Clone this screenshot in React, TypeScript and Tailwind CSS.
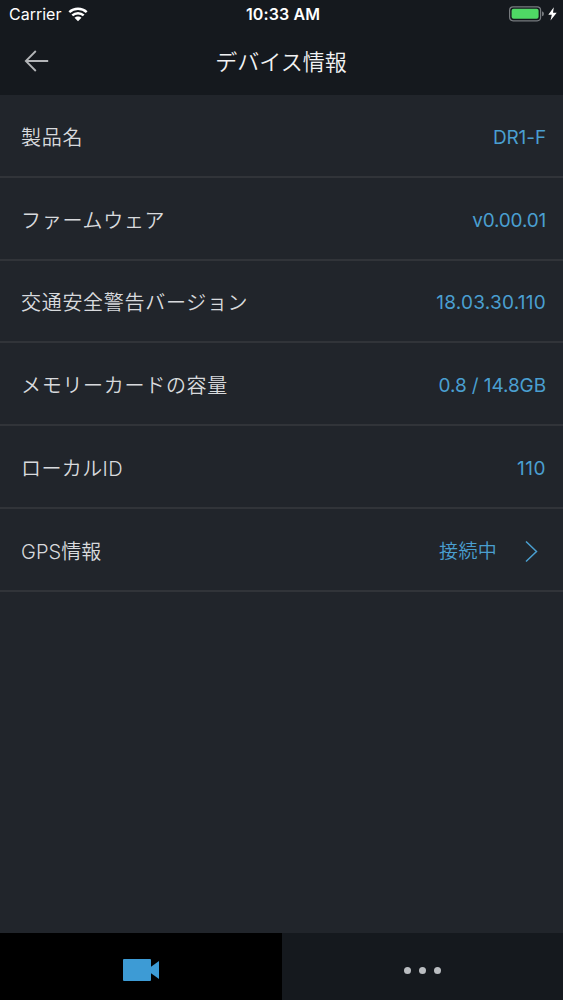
import React from "react";

const rows = [
  { label: "製品名", value: "DR1-F", valueClass: "tracking-[-0.1px]" },
  { label: "ファームウェア", value: "v0.00.01", valueClass: "tracking-[-0.2px]" },
  {
    label: "交通安全警告バージョン",
    value: "18.03.30.110",
    valueClass: "tracking-[0.25px]",
  },
  {
    label: "メモリーカードの容量",
    value: "0.8 / 14.8GB",
    valueClass: "tracking-[-0.1px]",
  },
  {
    label: "ローカルID",
    value: "110",
    labelClass: "tracking-[0.4px]",
    valueClass: "tracking-[0.5px]",
  },
  {
    label: "GPS情報",
    value: "接続中",
    labelClass: "tracking-[0.05px]",
    valueClass: "tracking-[0.3px] font-[350]",
    link: true,
  },
];

function StatusBar() {
  return (
    <div className="grid grid-cols-3 items-center h-7 pl-[9px] pr-[6px] text-white">
      <div className="flex items-center gap-[7px] text-[16px] leading-7">
        <span>Carrier</span>
        <svg width="20" height="15" viewBox="0 0 20 15" fill="none">
          <path
            d="M1.3 5.2C6.2 .7 13.8 .7 18.7 5.2M4.3 8.4C7.5 5.5 12.5 5.5 15.7 8.4"
            stroke="white"
            strokeWidth="2.5"
          />
          <path d="M6.5 10.8c2-1.9 5-1.9 7 0L10 14.3z" fill="white" />
        </svg>
      </div>
      <span className="text-center text-[16px] leading-7 font-semibold tracking-[0.1px]">
        10:33 AM
      </span>
      <div className="flex items-center justify-end">
        <svg width="36" height="16" viewBox="0 0 36 16" fill="none">
          <rect
            x=".6"
            y=".8"
            width="31"
            height="14"
            rx="3.5"
            stroke="#777b7f"
            strokeWidth="1.2"
          />
          <rect x="2.6" y="2.8" width="27" height="10" rx="2" fill="#4fd865" />
          <path d="M33 5.3q2 .5 2 2.5t-2 2.5z" fill="#777b7f" />
        </svg>
        <svg className="ml-[3px]" width="9" height="14" viewBox="0 0 9 14">
          <path d="M5.8 .3.3 7.8h3.5L2.5 13.6 8.7 5.7H5z" fill="white" />
        </svg>
      </div>
    </div>
  );
}

function Header() {
  return (
    <header className="h-[95px] shrink-0 bg-[#15191e]">
      <StatusBar />
      <div className="grid grid-cols-[80px_1fr_80px] items-center h-[66px]">
        <svg
          className="ml-6"
          width="25"
          height="22"
          viewBox="0 0 25 22"
          fill="none"
          stroke="#b3b5b8"
          strokeWidth="1.8"
        >
          <path d="M11.8 1 1.8 11l10 10M1.8 11h22.4" />
        </svg>
        <h1 className="-ml-px pt-0.5 text-center text-[22px] leading-8 font-[350] text-[#f1f2f3]">
          デバイス情報
        </h1>
      </div>
    </header>
  );
}

export default function App() {
  return (
    <div className="flex flex-col w-full h-screen overflow-hidden bg-[#21252b] font-['Inter','Noto_Sans_CJK_JP',sans-serif]">
      <Header />
      <main className="flex-1">
        {rows.map(({ label, value, labelClass, valueClass, link }) => (
          <div
            key={label}
            className="flex items-center justify-between h-[82.8px] pt-[5px] pl-[21px] pr-[17px] border-b-2 border-[#313439]"
          >
            <span
              className={`text-[20px] leading-8 font-[350] text-[#d8dadd] ${labelClass ?? "tracking-[0.7px]"}`}
            >
              {label}
            </span>
            <div className="flex items-center text-[#4a9fd0]">
              <span className={`text-[19px] leading-8 ${valueClass}`}>
                {value}
              </span>
              {link && (
                <svg
                  className="ml-7 mr-2"
                  width="13"
                  height="22"
                  viewBox="0 0 13 22"
                  fill="none"
                  stroke="currentColor"
                  strokeWidth="1.5"
                >
                  <path d="M1 .5 11.5 10.5 1 20.5" />
                </svg>
              )}
            </div>
          </div>
        ))}
      </main>
      <nav className="grid grid-cols-2 h-[67px] shrink-0">
        <div className="flex items-center justify-center pt-[7px] bg-black">
          <svg width="36" height="22" viewBox="0 0 36 22" fill="#3d9bd5">
            <rect width="28" height="22" rx="1" />
            <path d="M27 8.5 36 2v18l-9-6.5z" />
          </svg>
        </div>
        <div className="flex items-center justify-center gap-2 pt-[7px] bg-[#15191e]">
          <span className="size-[7px] rounded-full bg-[#babdc1]" />
          <span className="size-[7px] rounded-full bg-[#babdc1]" />
          <span className="size-[7px] rounded-full bg-[#babdc1]" />
        </div>
      </nav>
    </div>
  );
}
